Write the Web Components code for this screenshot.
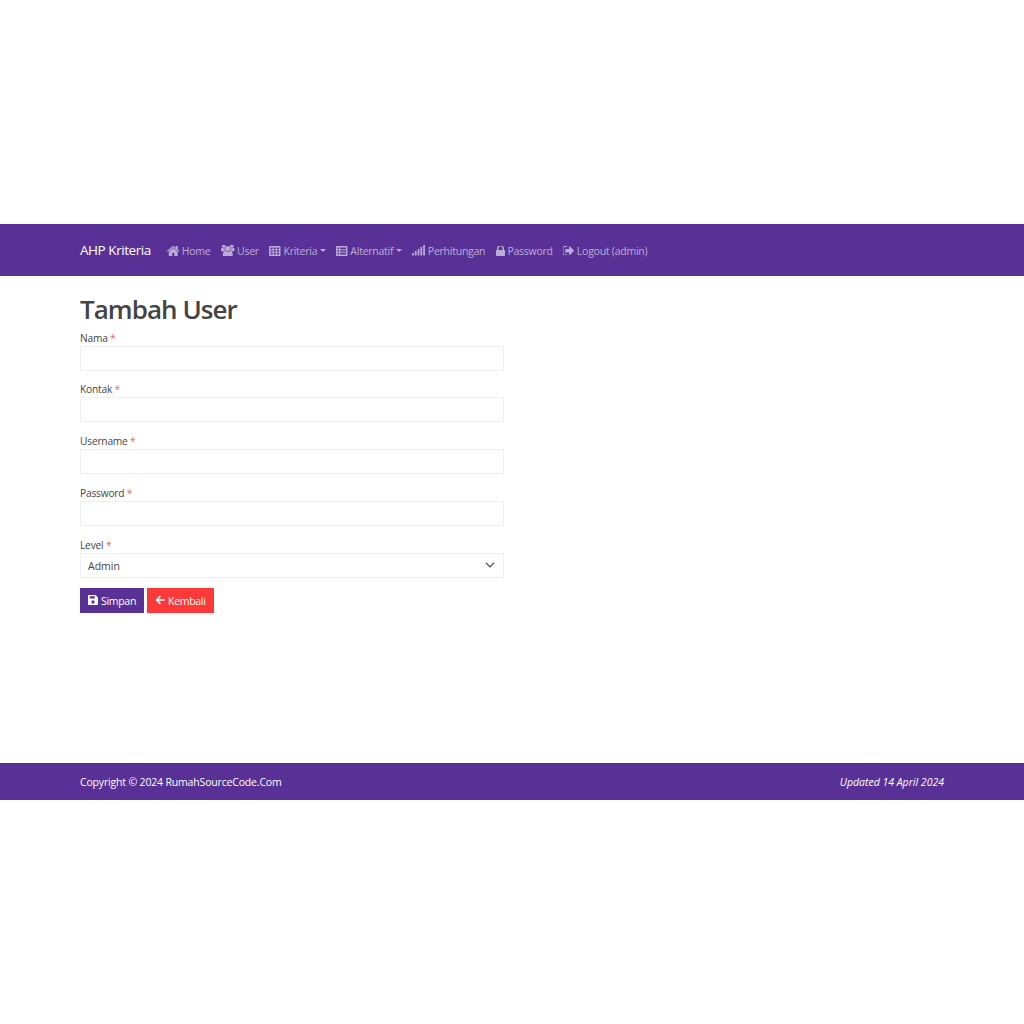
<!DOCTYPE html>
<html lang="id">
<head>
<meta charset="utf-8">
<title>Tambah User</title>
<style>
  body { margin: 0; padding-top: 224px; background: #fff; font-family: "Open Sans", "Liberation Sans", sans-serif; }
</style>
</head>
<body>
<app-navbar brand="AHP Kriteria">
  <nav-link icon="home">Home</nav-link>
  <nav-link icon="users">User</nav-link>
  <nav-link icon="table" caret>Kriteria</nav-link>
  <nav-link icon="list" caret>Alternatif</nav-link>
  <nav-link icon="signal">Perhitungan</nav-link>
  <nav-link icon="lock">Password</nav-link>
  <nav-link icon="logout">Logout (admin)</nav-link>
</app-navbar>
<user-form heading="Tambah User">
  <form-field label="Nama"></form-field>
  <form-field label="Kontak"></form-field>
  <form-field label="Username"></form-field>
  <form-field label="Password" type="password"></form-field>
  <form-field label="Level" type="select" value="Admin"></form-field>
  <app-button slot="actions" icon="save" color="#593196">Simpan</app-button>
  <app-button slot="actions" icon="back" color="#fc3939">Kembali</app-button>
</user-form>
<app-footer updated="Updated 14 April 2024">Copyright © 2024 RumahSourceCode.Com</app-footer>

<script>
// icon: [viewBox, width, height, markup]
const ICONS = {
  home: ["85 256 1622 1280", 12.5, 10, '<path d="M1472 992v480q0 26-19 45t-45 19h-384v-384h-256v384h-384q-26 0-45-19t-19-45v-480q0-1 .5-3t.5-3l575-474 575 474q1 2 1 6zm223-69l-62 74q-8 9-21 11h-3q-13 0-21-7l-692-577-692 577q-12 8-24 7-13-2-21-11l-62-74q-8-10-7-23.500t11-21.500l719-599q32-26 76-26t76 26l244 204v-195q0-14 9-23t23-9h192q14 0 23 9t9 23v408l219 182q10 8 11 21.500t-7 23.500z"/>'],
  users: ["-64 128 1920 1536", 13.5, 10.8, '<path d="M529 896q-162 5-265 128h-134q-82 0-138-40.500t-56-118.500q0-353 124-353 6 0 43.500 21t97.500 42.500 119 21.500q67 0 133-23-5 37-5 66 0 139 81 256zm1071 637q0 120-73 189.500t-194 69.500h-874q-121 0-194-69.500t-73-189.500q0-53 3.500-103.500t14-109 26.500-108.500 43-97.500 62-81 85.500-53.500 111.500-20q10 0 43 21.500t73 48 107 48 135 21.500 135-21.500 107-48 73-48 43-21.500q61 0 111.500 20t85.500 53.500 62 81 43 97.500 26.500 108.500 14 109 3.500 103.500zm-1024-1277q0 106-75 181t-181 75-181-75-75-181 75-181 181-75 181 75 75 181zm704 384q0 159-112.500 271.500t-271.500 112.500-271.500-112.500-112.500-271.500 112.500-271.500 271.500-112.500 271.500 112.500 112.500 271.500zm576 225q0 78-56 118.500t-138 40.500h-134q-103-123-265-128 81-117 81-256 0-29-5-66 66 23 133 23 59 0 119-21.500t97.500-42.500 43.500-21q124 0 124 353zm-128-609q0 106-75 181t-181 75-181-75-75-181 75-181 181-75 181 75 75 181z"/>'],
  table: ["0 0 16 14", 11.5, 10, '<path fill-rule="evenodd" d="M1 0h14c.6 0 1 .4 1 1v12c0 .6-.4 1-1 1H1c-.6 0-1-.4-1-1V1c0-.6.4-1 1-1zM2 2v2.600h3V2zM6.500 2v2.600h3V2zM11 2v2.600h3V2zM2 5.800v2.400h3V5.800zM6.500 5.800v2.400h3V5.800zM11 5.800v2.400h3V5.800zM2 9.400V12h3V9.400zM6.500 9.400V12h3V9.400zM11 9.400V12h3V9.400z"/>'],
  list: ["0 0 16 14", 11.5, 10, '<path fill-rule="evenodd" d="M1 0h14c.6 0 1 .4 1 1v12c0 .6-.4 1-1 1H1c-.6 0-1-.4-1-1V1c0-.6.4-1 1-1zM2 2v2.600h2.200V2zM5.800 2v2.600H14V2zM2 5.800v2.400h2.200V5.800zM5.800 5.800v2.400H14V5.800zM2 9.400V12h2.200V9.400zM5.800 9.400V12H14V9.400z"/>'],
  signal: ["0 0 16 13", 13, 10.5, '<rect y="10" width="2.200" height="3"/><rect x="3.400" y="7.500" width="2.200" height="5.500"/><rect x="6.900" y="5" width="2.200" height="8"/><rect x="10.400" y="2.500" width="2.200" height="10.500"/><rect x="13.800" width="2.200" height="13"/>'],
  lock: ["320 256 1152 1280", 9, 10, '<path d="M640 768h512v-192q0-106-75-181t-181-75-181 75-75 181v192zm832 96v576q0 40-28 68t-68 28h-960q-40 0-68-28t-28-68v-576q0-40 28-68t68-28h32v-192q0-184 132-316t316-132 316 132 132 316v192h32q40 0 68 28t28 68z"/>'],
  logout: ["128 256 1504 1280", 11, 9.5, '<path d="M704 1440q0 4 1 20t.5 26.500-3 23.500-10 19.500-20.500 6.500h-320q-119 0-203.500-84.500t-84.500-203.500v-704q0-119 84.500-203.500t203.500-84.500h320q13 0 22.500 9.500t9.500 22.500q0 4 1 20t.5 26.500-3 23.500-10 19.500-20.500 6.500h-320q-66 0-113 47t-47 113v704q0 66 47 113t113 47h312l11.500 1 11.500 3 8 5.500 7 9 2 13.500zm928-544q0 26-19 45l-544 544q-19 19-45 19t-45-19-19-45v-288h-448q-26 0-45-19t-19-45v-384q0-26 19-45t45-19h448v-288q0-26 19-45t45-19 45 19l544 544q19 19 19 45z"/>'],
  save: ["0 0 14 14", 10, 10, '<path fill-rule="evenodd" d="M1.500 0h9L14 3.500V12.500c0 .8-.7 1.500-1.500 1.500h-11C.7 14 0 13.300 0 12.500v-11C0 .7.7 0 1.500 0zM2.500 1.800V5h7V1.800zM7 7.500a2.300 2.300 0 1 0 0 4.600 2.300 2.300 0 0 0 0-4.600z"/>'],
  back: ["0 0 14 14", 10, 10, '<path d="M6.800 .8 8.400 2.400 4.600 5.800H14v2.400H4.600l3.800 3.400-1.600 1.600L.6 7z"/>']
};

function iconSvg(name) {
  const [box, w, h, body] = ICONS[name];
  return `<svg viewBox="${box}" width="${w}" height="${h}" fill="currentColor">${body}</svg>`;
}

class AppNavbar extends HTMLElement {
  connectedCallback() {
    this.attachShadow({ mode: "open" }).innerHTML = `
      <style>
        :host { display: block; background: #593196; height: 52px; }
        .bar { display: flex; align-items: center; height: 100%; margin: 0 80px; }
        .brand { color: #fff; font-size: 13.5px; letter-spacing: -0.45px; margin-right: 10.7px; }
        nav { display: flex; align-items: center; padding-top: 1px; }
      </style>
      <div class="bar">
        <span class="brand">${this.getAttribute("brand")}</span>
        <nav><slot></slot></nav>
      </div>`;
  }
}

class NavLink extends HTMLElement {
  connectedCallback() {
    const caret = this.hasAttribute("caret") ? '<i class="caret"></i>' : "";
    this.attachShadow({ mode: "open" }).innerHTML = `
      <style>
        :host { display: block; padding: 0 5.3px; font-size: 10.5px; letter-spacing: -0.25px; color: rgba(255, 255, 255, .6); }
        a { display: flex; align-items: center; gap: 2.5px; white-space: nowrap; }
        svg { display: block; }
        .caret { border-top: 3.5px solid; border-left: 3.2px solid transparent; border-right: 3.2px solid transparent; }
      </style>
      <a>${iconSvg(this.getAttribute("icon"))}<span><slot></slot></span>${caret}</a>`;
  }
}

class UserForm extends HTMLElement {
  connectedCallback() {
    this.attachShadow({ mode: "open" }).innerHTML = `
      <style>
        :host { display: block; height: 487px; box-sizing: border-box; padding: 0 80px; }
        h1 { margin: 0; padding-top: 16px; height: 53.75px; box-sizing: border-box; font-size: 26px; line-height: 34px; font-weight: 600; letter-spacing: -0.95px; color: #444; }
        .fields { width: 424px; display: flex; flex-direction: column; gap: 10.7px; }
        .actions { display: flex; gap: 3px; margin-top: 10px; }
      </style>
      <h1>${this.getAttribute("heading")}</h1>
      <div class="fields"><slot></slot></div>
      <div class="actions"><slot name="actions"></slot></div>`;
  }
}

class FormField extends HTMLElement {
  connectedCallback() {
    const type = this.getAttribute("type") || "text";
    const control = type === "select"
      ? `<div class="box select"><span>${this.getAttribute("value")}</span>
           <svg viewBox="0 0 16 16" width="10" height="10" fill="none" stroke="#444" stroke-width="2" stroke-linecap="round" stroke-linejoin="round"><path d="m2 5 6 6 6-6"/></svg></div>`
      : `<input class="box" type="${type}">`;
    this.attachShadow({ mode: "open" }).innerHTML = `
      <style>
        :host { display: block; }
        label { display: block; height: 16px; font-size: 10.2px; line-height: 16.5px; letter-spacing: -0.2px; color: #444; }
        b { color: #fc3939; font-weight: 400; opacity: .8; }
        .box { display: block; width: 100%; height: 25px; box-sizing: border-box; border: 1px solid #f0f0f0; background: #fff; margin: 0; padding: 0 7px; font: inherit; font-size: 10.5px; color: #444; outline: 0; }
        .select { display: flex; align-items: center; justify-content: space-between; padding-right: 8px; }
        .select span { padding-top: 2px; }
        svg { display: block; }
      </style>
      <label>${this.getAttribute("label")} <b>*</b></label>
      ${control}`;
  }
}

class AppButton extends HTMLElement {
  connectedCallback() {
    this.attachShadow({ mode: "open" }).innerHTML = `
      <style>
        :host { display: block; }
        button { display: flex; align-items: center; gap: 3px; height: 25px; border: 0; margin: 0; padding: 0 8px; background: ${this.getAttribute("color")}; color: #fff; font: inherit; font-size: 10.5px; letter-spacing: -0.3px; }
        span { padding-top: 2px; }
        svg { display: block; }
      </style>
      <button>${iconSvg(this.getAttribute("icon"))}<span><slot></slot></span></button>`;
  }
}

class AppFooter extends HTMLElement {
  connectedCallback() {
    this.attachShadow({ mode: "open" }).innerHTML = `
      <style>
        :host { display: block; background: #593196; color: #fff; font-size: 10.5px; letter-spacing: -0.17px; }
        div { display: flex; align-items: center; justify-content: space-between; height: 37px; margin: 0 80px; }
        em { font-style: italic; letter-spacing: 0; }
      </style>
      <div><span><slot></slot></span><em>${this.getAttribute("updated")}</em></div>`;
  }
}

customElements.define("app-navbar", AppNavbar);
customElements.define("nav-link", NavLink);
customElements.define("user-form", UserForm);
customElements.define("form-field", FormField);
customElements.define("app-button", AppButton);
customElements.define("app-footer", AppFooter);
</script>
</body>
</html>
